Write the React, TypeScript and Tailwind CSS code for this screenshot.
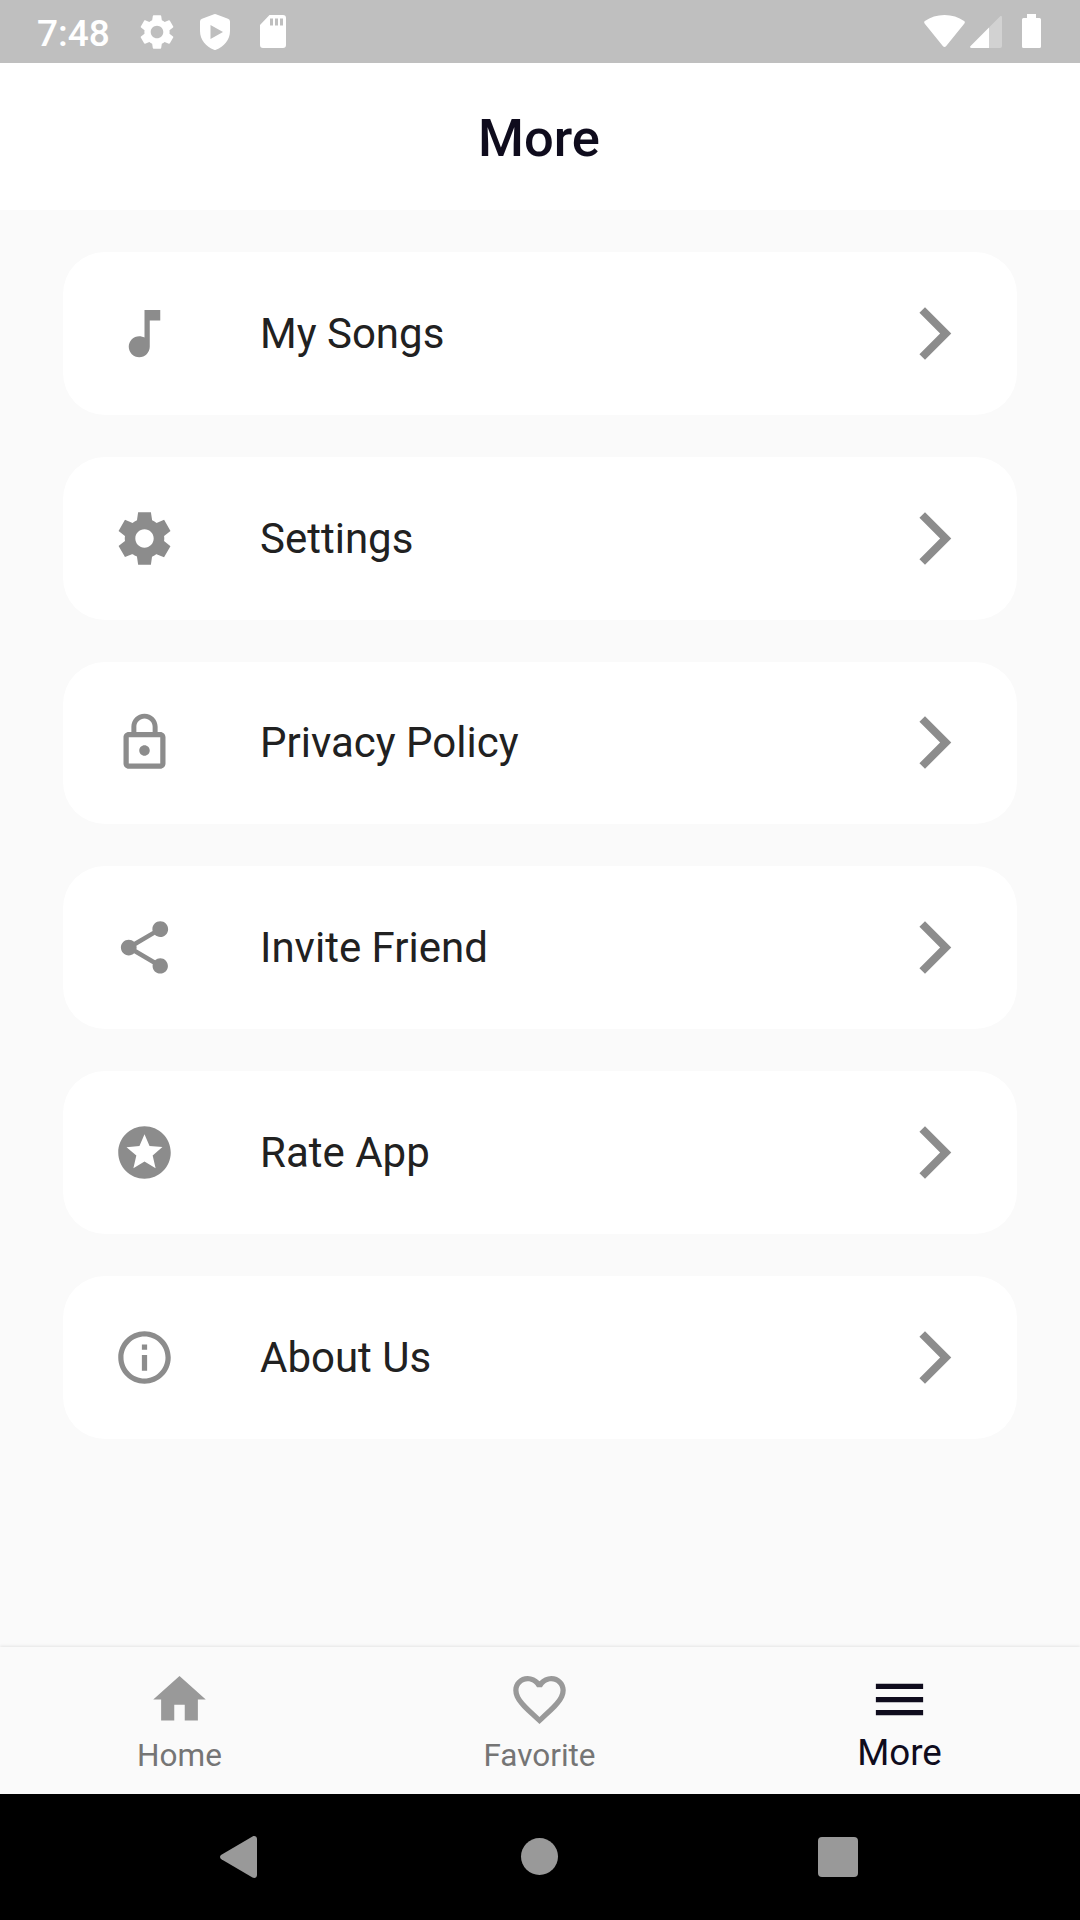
import type React from "react";
import {
  MdFavoriteBorder,
  MdHome,
  MdInfoOutline,
  MdLockOutline,
  MdMenu,
  MdMusicNote,
  MdSettings,
  MdShare,
  MdStars,
} from "react-icons/md";

const SettingsSharp: React.FC = () => (
  <svg viewBox="0 0 24 24" width="1em" height="1em" fill="currentColor">
    <path d="M19.44 12.99l.01-.02c.04-.32.08-.64.08-.98 0-.34-.03-.66-.08-.98l.01.02 2.44-1.92-2.43-4.22-2.87 1.16.01.01c-.52-.4-1.09-.74-1.71-1h.01L14.44 2H9.57l-.44 3.07h.01c-.62.26-1.19.6-1.71 1l.01-.01-2.88-1.17-2.44 4.22 2.44 1.92.01-.02c-.04.32-.08.64-.08.98 0 .34.03.66.08.98l-.01-.02-2.1 1.65-.33.26 2.43 4.2 2.88-1.15-.02-.04c.53.41 1.1.75 1.73 1.01h-.03L9.58 22h4.85s.03-.18.06-.42l.38-2.65h-.01c.62-.26 1.2-.6 1.73-1.01l-.02.04 2.88 1.15 2.43-4.2s-.14-.12-.33-.26l-2.11-1.66zM12 15.5c-1.93 0-3.5-1.57-3.5-3.5s1.57-3.5 3.5-3.5 3.5 1.57 3.5 3.5-1.57 3.5-3.5 3.5z" />
  </svg>
);

const ArrowForward: React.FC = () => (
  <svg viewBox="0 0 24 24" width="1em" height="1em" fill="currentColor">
    <path d="M5.880 4.120L13.760 12l-7.880 7.880L8 22l10-10L8 2z" />
  </svg>
);

const menuItems = [
  { title: "My Songs", icon: MdMusicNote },
  { title: "Settings", icon: SettingsSharp },
  { title: "Privacy Policy", icon: MdLockOutline },
  { title: "Invite Friend", icon: MdShare },
  { title: "Rate App", icon: MdStars },
  { title: "About Us", icon: MdInfoOutline },
];

const tabs = [
  { title: "Home", icon: MdHome, active: false },
  { title: "Favorite", icon: MdFavoriteBorder, active: false },
  { title: "More", icon: MdMenu, active: true },
];

const StatusBar: React.FC = () => (
  <div className="h-[63px] shrink-0 flex items-center justify-between bg-[#bfbfbf] pl-[37px] pr-[39px] text-white">
    <div className="flex items-center">
      <span className="w-[99px] pt-[3px] text-[37px] leading-none font-medium">7:48</span>
      <MdSettings className="size-[42px]" />
      <svg className="ml-[22px] w-[30px] h-[36px]" viewBox="0 0 30 36" fill="currentColor">
        <path
          fillRule="evenodd"
          d="M14 .3a3 3 0 0 1 2 0l12 4.5a3 3 0 0 1 2 2.800V17c0 8.500-6 16-14 18.700a3 3 0 0 1-2 0C6 33 0 25.500 0 17V7.600a3 3 0 0 1 2-2.800zM10.500 11v14L23 18z"
        />
      </svg>
      <svg className="ml-[30px] w-[26px] h-[33px]" viewBox="0 0 26 33" fill="currentColor">
        <path
          fillRule="evenodd"
          d="M9.500 0H23a3 3 0 0 1 3 3v27a3 3 0 0 1-3 3H3a3 3 0 0 1-3-3V10zM10 3.500v7h3v-7zM15 3.500v7h3v-7zM20 3.500v7h3v-7z"
        />
      </svg>
    </div>
    <div className="flex items-center pb-[1px]">
      <svg className="w-[41px] h-[32px]" viewBox="0 0 41 32" fill="currentColor">
        <path d="M.8 8.700C-.1 7.700 0 6.700.9 6 6.500 2 13 0 20.500 0S34.500 2 40.100 6c.9.700 1 1.700.1 2.700L22.200 31c-1 1.200-2.400 1.200-3.400 0z" />
      </svg>
      <svg className="ml-[5px] mt-[1px] w-[32px] h-[32px]" viewBox="0 0 32 32" fill="currentColor">
        <path d="M30 .5c1-.8 2-.3 2 .8V30a2 2 0 0 1-2 2H19V11.500z" opacity=".3" />
        <path d="M19 11.500V32H1.500C0 32-.4 31 .6 30z" />
      </svg>
      <svg className="ml-[20px] w-[19px] h-[34px]" viewBox="0 0 19 34" fill="currentColor">
        <path d="M5 0h9v4h3.500A1.500 1.500 0 0 1 19 5.500v27a1.500 1.500 0 0 1-1.500 1.500h-16A1.500 1.500 0 0 1 0 32.500v-27A1.500 1.500 0 0 1 1.500 4H5z" />
      </svg>
    </div>
  </div>
);

const SystemNav: React.FC = () => (
  <div className="h-[126px] shrink-0 flex items-center bg-black pl-[220px] text-[#999999]">
    <svg className="w-[37px] h-[42px]" viewBox="0 0 37 42" fill="currentColor">
      <path d="M32.500.5C34.500-.6 37 .3 37 3v36c0 2.700-2.500 3.600-4.500 2.500L1.400 23.200c-1.800-1.100-1.800-3.300 0-4.400z" />
    </svg>
    <div className="ml-[264px] mb-[1px] size-[37px] rounded-full bg-[#999999]"></div>
    <div className="ml-[260px] size-10 rounded-[4px] bg-[#999999]"></div>
  </div>
);

export default function App() {
  return (
    <div className="w-[1080px] h-[1920px] flex flex-col overflow-hidden bg-[#fafafa] font-[Roboto,sans-serif]">
      <StatusBar />

      <header className="h-[147px] shrink-0 flex items-center justify-center bg-white pt-1 pr-[2px]">
        <h1 className="text-[52.5px] leading-none font-medium text-[#0f0c1d]">More</h1>
      </header>

      <main className="flex-1 flex flex-col gap-[42px] px-[63px] pt-[42px]">
        {menuItems.map((item) => (
          <div
            key={item.title}
            className="h-[162.75px] shrink-0 flex items-center rounded-[42px] bg-white px-[50px] text-[63px] text-[#8c8c8c]"
          >
            <div className="w-[147px]">
              <item.icon />
            </div>
            <span className="flex-1 pt-[1px] text-[42px] leading-none text-[#212121]">{item.title}</span>
            <ArrowForward />
          </div>
        ))}
      </main>

      <nav className="h-[147px] shrink-0 grid grid-cols-3 bg-[#fafafa] shadow-[0_-1px_3px_rgba(0,0,0,0.09)]">
        {tabs.map((tab) => (
          <div
            key={tab.title}
            className={`flex flex-col items-center pt-[21px] pr-px ${tab.active ? "text-[#0f0c1d]" : "text-[#999999]"}`}
          >
            <tab.icon className="size-[63px]" />
            <span
              className={
                tab.active
                  ? "mt-[3px] text-[36.75px] leading-[38px]"
                  : "mt-[7px] text-[31.5px] leading-[36px] text-[#757575]"
              }
            >
              {tab.title}
            </span>
          </div>
        ))}
      </nav>

      <SystemNav />
    </div>
  );
}
